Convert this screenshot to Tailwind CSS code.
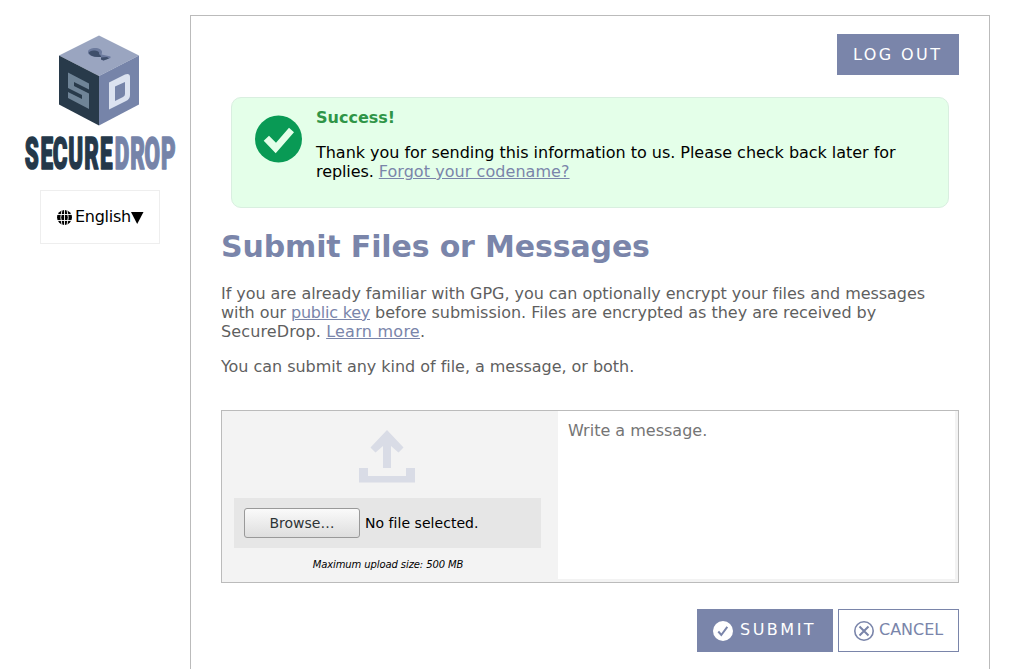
<!DOCTYPE html>
<html lang="en">
<head>
<meta charset="utf-8">
<title>SecureDrop | Submit Files or Messages</title>
<script src="https://cdn.jsdelivr.net/npm/@tailwindcss/browser@4"></script>
</head>
<body class="bg-white font-['DejaVu_Sans',sans-serif] text-base leading-[19px] text-black h-[669px] overflow-hidden">
<div class="flex h-full">
  <aside class="w-[190px] shrink-0 flex flex-col pt-[35px]">
    <svg class="ml-[24px] w-[152px] h-[136px] overflow-visible" viewBox="24 35 152 136" role="img" aria-label="SecureDrop">
      <path d="M99 35.500 139 55.500 99 76 59 55.500Z" fill="#9aa5c0"/>
      <path d="M59 55.500 99 76V125.500L59 104.500Z" fill="#283a4a"/>
      <path d="M139 55.500 99 76V125.500L139 104.500Z" fill="#7684a9"/>
      <path d="M68 72.500 89 83.500V89.500L74 82V86L89 93.500V109L68 98V92L82 99V95L68 88Z" fill="#6f8497"/>
      <path fill-rule="evenodd" d="M109 82.500 125 74.500Q130 73 130 77V95Q130 99 126 101L109 109.500ZM115 86.500V101L123 97Q125 96 125 94V82Z" fill="#dbe2f0"/>
      <path d="M88 52C88 49 92 48 95 48C99 48 102.500 50 102 52.500L101.500 54.500 110.500 56.500V58L103.500 60.500L101 59.500V57C97 57.500 88 56.500 88 52Z" fill="#6c7a9d"/>
      <path d="M88.500 53Q90 50 95 50.500Q100 51 99 54L101 56V57Q95 57.500 91 55.500ZM101 57.500 107 57 109 58.500 103.500 60.500 101 59.500Z" fill="#3f4f6b"/>
      <text transform="translate(24 169.300) scale(.51 1)" x="15.300 44.500 71 101.500 132.500 161.500 192 222.500 251.500 283" text-anchor="middle" class="font-['Roboto',sans-serif]" font-weight="900" font-size="44" stroke-width="1.600" stroke-linejoin="round" fill="#24384a" stroke="#24384a">SECURE<tspan fill="#7684a9" stroke="#7684a9">DROP</tspan></text>
    </svg>
    <button class="ml-[40px] mt-[19px] w-[120px] h-[54px] border border-[#eeeeee] flex items-center pl-[16px]">
      <svg class="w-[15px] h-[15px] mr-[3px]" viewBox="0 0 15 15"><circle cx="7.500" cy="7.500" r="7.500"/><path d="M0 4.500H15M0 10.500H15M7.500 0V15M5 0Q2.500 7.500 5 15M10 0Q12.500 7.500 10 15" fill="none" stroke="#fff" stroke-width=".9"/></svg>
      <span class="-mt-[2px] tracking-[-0.28px]">English</span><svg class="w-[13px] h-[12px] mt-px" viewBox="0 0 13 12"><path d="M0 0H12.500L6.200 12Z"/></svg>
    </button>
  </aside>
  <main class="w-[800px] mt-[15px] h-[654px] shrink-0 border border-b-0 border-[#bbbbbb] px-[30px] pt-[18px] flex flex-col">
    <a class="self-end w-[122px] h-[41px] shrink-0 bg-[#7a85aa] text-white tracking-[2.4px] flex items-center pl-[16px] whitespace-nowrap">LOG OUT</a>
    <section class="mx-[10px] mt-[22px] h-[111px] shrink-0 rounded-[10px] border border-[#d9efe0] bg-[#e4ffe9] flex pl-[23px]">
      <svg class="w-[48px] h-[48px] mt-[17px] mr-[13px] shrink-0" viewBox="0 0 48 48"><circle cx="23.500" cy="24" r="23.500" fill="#099a55"/><path d="M8.700 25.700 14 20.700 21 27.700 34 12.700 39 17.200 20.700 38.300Z" fill="#e4ffe9"/></svg>
      <div class="pt-[10px] whitespace-nowrap">
        <h2 class="font-bold text-[#2f9547]">Success!</h2>
        <p class="mt-[16px]"><span class="tracking-[-0.028px]">Thank you for sending this information to us. Please check back later for</span><br><span class="tracking-[-0.08px]">replies. </span><a class="underline text-[#7a85aa] tracking-[0.06px]">Forgot your codename?</a></p>
      </div>
    </section>
    <h1 class="mt-[21px] text-[30px] leading-[36px] font-bold text-[#7a85aa] tracking-[-0.14px]">Submit Files or Messages</h1>
    <p class="mt-[19px] text-[#5f5f5f] whitespace-nowrap"><span class="tracking-[-0.045px]">If you are already familiar with GPG, you can optionally encrypt your files and messages</span><br><span class="tracking-[-0.07px]">with our </span><a class="underline text-[#7a85aa] tracking-[-0.22px]">public key</a><span class="tracking-[-0.02px]"> before submission. Files are encrypted as they are received by</span><br><span class="tracking-[0.12px]">SecureDrop. </span><a class="underline text-[#7a85aa] tracking-[0.26px]">Learn more</a>.</p>
    <p class="mt-[16px] text-[#5f5f5f] tracking-[-0.035px]">You can submit any kind of file, a message, or both.</p>
    <div class="mt-[34px] h-[173px] shrink-0 border border-[#bbbbbb] bg-[#f3f3f3] flex">
      <div class="w-[336px] pl-[12px] pr-[17px] flex flex-col items-center">
        <svg class="w-[56px] h-[53px] mt-[19px] mr-px" viewBox="0 0 56 53"><path d="M28 0 44.500 17.500 39.500 22.500 32 16V38H24V16L16.500 22.500 11.500 17.500ZM0 38H9V46H47V38H56V52.500H0Z" fill="#d9dce6"/></svg>
        <div class="mt-[15px] w-full h-[50px] bg-[#e6e6e6] flex items-center pl-[10px] text-[14px]">
          <button class="w-[116px] h-[30px] border border-[#999999] rounded-[3px] bg-linear-to-b from-[#fafafa] to-[#dedede] text-[#2e3436]">Browse…</button>
          <span class="ml-[5px] tracking-[0.04px]">No file selected.</span>
        </div>
        <p class="mt-[10px] text-[10px] leading-[14px] italic tracking-[-0.1px] pl-px">Maximum upload size: 500 MB</p>
      </div>
      <div class="w-[397px] h-[168px] bg-white text-[#757575] px-[10px] pt-[10px]">Write a message.</div>
    </div>
    <div class="mt-[26px] flex justify-end gap-[5px]">
      <button class="w-[136px] h-[43px] bg-[#7a85aa] text-white flex items-center pl-[16px] pb-[2px]">
        <svg class="w-[20px] h-[20px] mr-[7px] mt-[2px]" viewBox="0 0 20 20"><circle cx="10" cy="10" r="10" fill="#fff"/><path d="M5.300 10.500 8.300 14 14.300 5.800" fill="none" stroke="#7a85aa" stroke-width="2"/></svg>
        <span class="tracking-[2.5px] -mt-px">SUBMIT</span>
      </button>
      <button class="w-[121px] h-[43px] border border-[#7a85aa] text-[#7a85aa] flex items-center pl-[15px] pb-[2px]">
        <svg class="w-[20px] h-[20px] mr-[5px] mt-[2px]" viewBox="0 0 20 20" fill="none" stroke="#7a85aa"><circle cx="10" cy="10" r="9.200" stroke-width="1.600"/><path d="M5.500 5.500 14.500 14.500M14.500 5.500 5.500 14.500" stroke-width="2"/></svg>
        <span class="-mt-px">CANCEL</span>
      </button>
    </div>
  </main>
</div>
</body>
</html>
